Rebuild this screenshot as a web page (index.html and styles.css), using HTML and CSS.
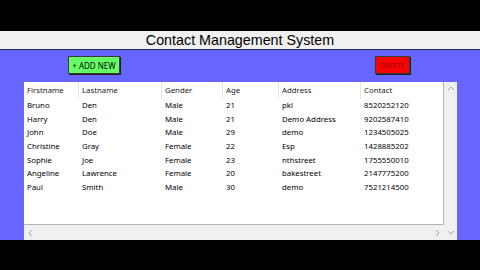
FILE: index.html
```html
<!DOCTYPE html>
<html>
<head>
<meta charset="utf-8">
<link rel="stylesheet" href="styles.css">
</head>
<body>
<div class="screen">
  <div class="band"></div>
  <div class="titlebar">Contact Management System</div>
  <div class="main">
    <div class="toolbar">
      <div class="btn add">+ ADD NEW</div>
      <div class="btn del">DELETE</div>
    </div>
    <div class="listbox">
      <div class="list">
        <div class="grid head">
          <div>Firstname</div><div>Lastname</div><div>Gender</div><div>Age</div><div>Address</div><div>Contact</div>
        </div>
        <div class="grid row"><div>Bruno</div><div>Den</div><div>Male</div><div>21</div><div>pkl</div><div>8520252120</div></div>
        <div class="grid row"><div>Harry</div><div>Den</div><div>Male</div><div>21</div><div>Demo Address</div><div>9202587410</div></div>
        <div class="grid row"><div>John</div><div>Doe</div><div>Male</div><div>29</div><div>demo</div><div>1234505025</div></div>
        <div class="grid row"><div>Christine</div><div>Gray</div><div>Female</div><div>22</div><div>Esp</div><div>1428885202</div></div>
        <div class="grid row"><div>Sophie</div><div>Joe</div><div>Female</div><div>23</div><div>nthstreet</div><div>1755550010</div></div>
        <div class="grid row"><div>Angeline</div><div>Lawrence</div><div>Female</div><div>20</div><div>bakestreet</div><div>2147775200</div></div>
        <div class="grid row"><div>Paul</div><div>Smith</div><div>Male</div><div>30</div><div>demo</div><div>7521214500</div></div>
      </div>
      <div class="vscroll">
        <svg class="arrow" width="8" height="6" viewBox="0 0 8 6"><path d="M1 5 L4 2 L7 5" fill="none" stroke="#a6a6a6" stroke-width="1"/></svg>
        <svg class="arrow" width="8" height="6" viewBox="0 0 8 6"><path d="M1 1 L4 4 L7 1" fill="none" stroke="#a6a6a6" stroke-width="1"/></svg>
      </div>
      <div class="hscroll">
        <svg class="arrow" width="6" height="8" viewBox="0 0 6 8"><path d="M5 1 L2 4 L5 7" fill="none" stroke="#a6a6a6" stroke-width="1"/></svg>
        <svg class="arrow" width="6" height="8" viewBox="0 0 6 8"><path d="M1 1 L4 4 L1 7" fill="none" stroke="#a6a6a6" stroke-width="1"/></svg>
      </div>
    </div>
  </div>
  <div class="band bottom"></div>
</div>
</body>
</html>
```
FILE: styles.css
```css
* { box-sizing: border-box; }
html, body { margin: 0; padding: 0; background: #000; }
.screen {
  width: 480px;
  height: 270px;
  display: flex;
  flex-direction: column;
  overflow: hidden;
}
.band { height: 31px; background: #000; flex: none; }
.band.bottom { height: 30px; }
.titlebar {
  height: 19px;
  flex: none;
  background: #f0f0f0;
  border-bottom: 1px solid #2a2a55;
  text-align: center;
  font-family: "Liberation Sans", Arial, sans-serif;
  font-size: 14.3px;
  line-height: 18px;
  color: #000;
}
.main {
  flex: 1;
  background: #6666ff;
  display: flex;
  flex-direction: column;
  padding-top: 6px;
}
.toolbar {
  height: 18px;
  display: flex;
  align-items: stretch;
  padding-left: 68px;
}
.btn {
  font-family: "Noto Sans", "Open Sans", sans-serif;
  border: 1px solid #3a3a3a;
  box-shadow: 1px 1px 0 #1e1e1e;
  display: flex;
  align-items: center;
  justify-content: center;
  white-space: nowrap;
}
.add {
  width: 52px;
  background: #66ff66;
  color: #000;
  font-size: 8px;
}
.del {
  width: 35px;
  margin-left: 255px;
  background: #ff0000;
  color: #8c0000;
  font-size: 7px;
}
.listbox {
  margin-top: 8px;
  margin-left: 24px;
  width: 433px;
  flex: 1;
  display: grid;
  grid-template-columns: 1fr 13px;
  grid-template-rows: 1fr 15px;
  background: #f0f0f0;
}
.list {
  background: #fff;
  border-right: 1px solid #b4b4b4;
  border-bottom: 1px solid #b4b4b4;
  font-family: "Noto Sans", "Open Sans", sans-serif;
  font-size: 7.8px;
  color: #000;
}
.grid {
  display: grid;
  grid-template-columns: 55px 83px 61px 56px 82px 1fr;
}
.grid > div { padding-left: 3px; white-space: nowrap; }
.head { height: 17px; line-height: 17px; color: #222; }
.head > div { border-right: 1px solid #e5e5e5; }
.head > div:last-child { border-right: none; }
.row { height: 13.67px; line-height: 13.67px; }
.vscroll {
  grid-row: 1 / 3;
  grid-column: 2;
  display: flex;
  flex-direction: column;
  justify-content: space-between;
  align-items: center;
  padding: 3px 0 4px;
}
.hscroll {
  grid-row: 2;
  grid-column: 1;
  display: flex;
  justify-content: space-between;
  align-items: center;
  padding: 0 3px 0 3px;
}
.arrow { display: block; }
```
